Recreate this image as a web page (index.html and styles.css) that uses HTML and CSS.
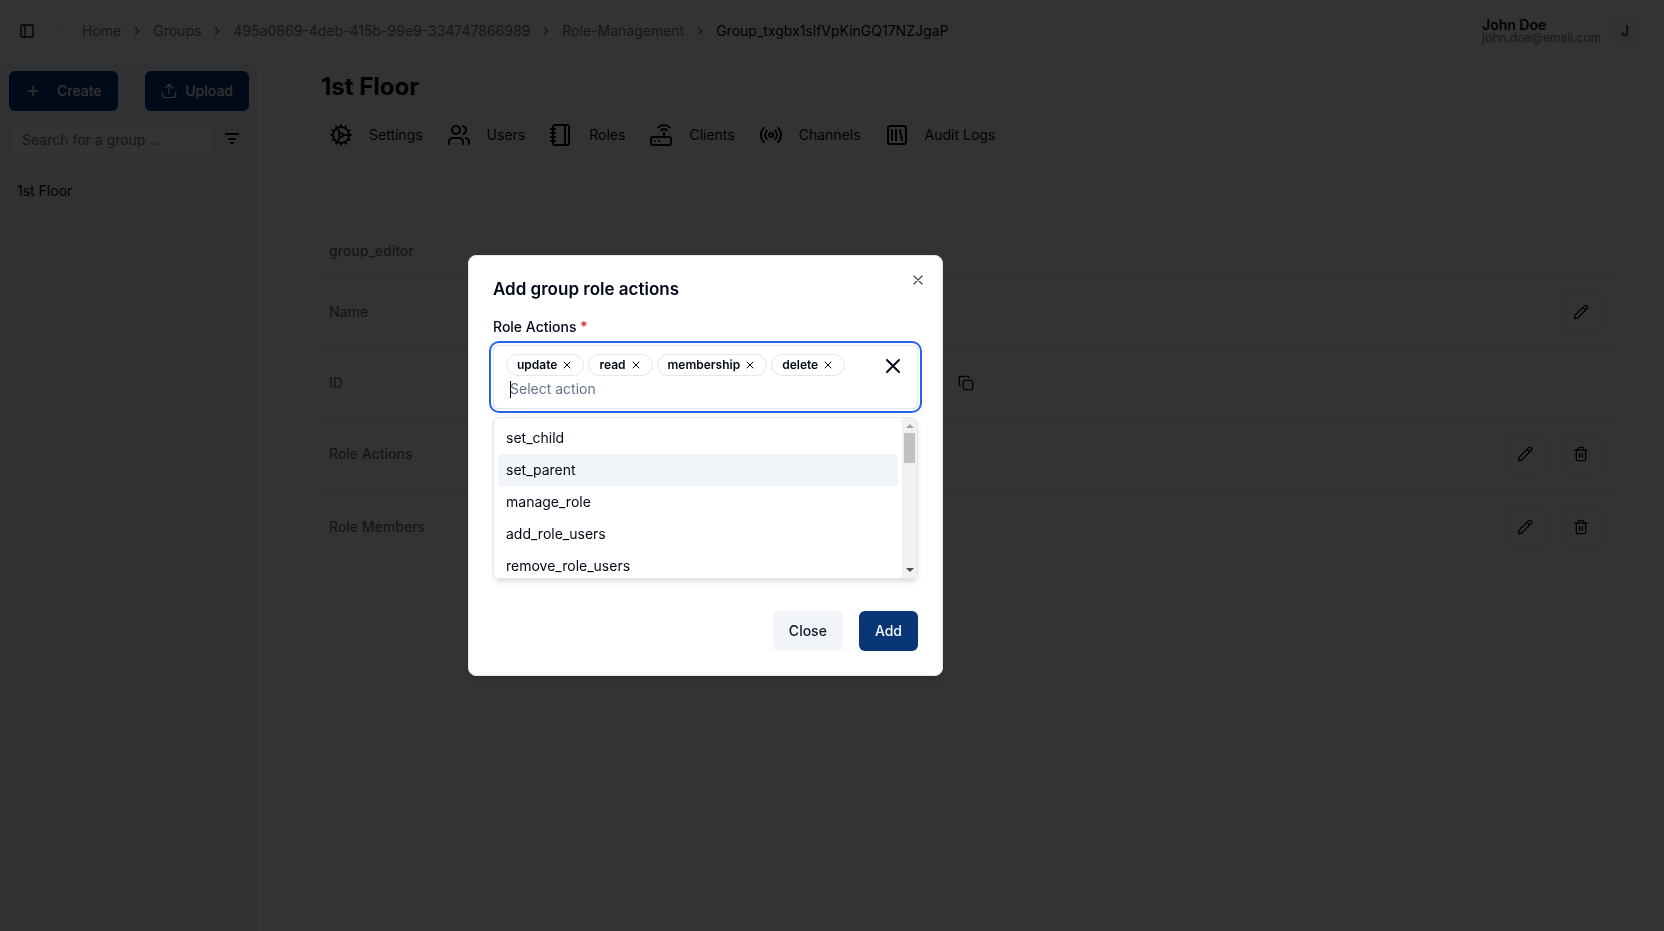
FILE: index.html
```html
<!DOCTYPE html>
<html lang="en">
<head>
<meta charset="utf-8">
<title>1st Floor - Role Management</title>
<link rel="stylesheet" href="styles.css">
</head>
<body>
<svg class="sprite" aria-hidden="true">
  <symbol id="chevron" viewBox="0 0 24 24"><path d="m9 18 6-6-6-6"/></symbol>
  <symbol id="x" viewBox="0 0 24 24"><path d="M18 6 6 18M6 6l12 12"/></symbol>
  <symbol id="pencil" viewBox="0 0 24 24"><path d="M21.174 6.812a1 1 0 0 0-3.986-3.987L3.842 16.174a2 2 0 0 0-.5.83l-1.321 4.352a.5.5 0 0 0 .623.622l4.353-1.32a2 2 0 0 0 .83-.497zM15 5l4 4"/></symbol>
  <symbol id="trash" viewBox="0 0 24 24"><path d="M3 6h18M19 6v14a2 2 0 0 1-2 2H7a2 2 0 0 1-2-2V6M8 6V4a2 2 0 0 1 2-2h4a2 2 0 0 1 2 2v2M10 11v6M14 11v6"/></symbol>
</svg>
<div class="page">
  <header class="topbar">
    <button class="plain" aria-label="Toggle sidebar"><svg class="i16" viewBox="0 0 24 24"><rect width="18" height="18" x="3" y="3" rx="2"/><path d="M9 3v18"/></svg></button>
    <span class="divider"></span>
    <nav class="crumbs" aria-label="Breadcrumb">
      <a href="#">Home</a><svg class="i14"><use href="#chevron"/></svg>
      <a href="#">Groups</a><svg class="i14"><use href="#chevron"/></svg>
      <a href="#">495a0869-4deb-415b-99e9-334747866989</a><svg class="i14"><use href="#chevron"/></svg>
      <a href="#">Role-Management</a><svg class="i14"><use href="#chevron"/></svg>
      <span class="current">Group_txgbx1slfVpKinGQ17NZJgaP</span>
    </nav>
    <div class="account">
      <div class="who"><span class="name">John Doe</span><span class="mail">john.doe@email.com</span></div>
      <span class="avatar">J</span>
    </div>
  </header>
  <div class="body">
    <aside class="sidebar">
      <div class="actions">
        <button class="btn primary create"><svg class="i16" viewBox="0 0 24 24"><path d="M5 12h14M12 5v14"/></svg>Create</button>
        <button class="btn primary upload"><svg class="i16" viewBox="0 0 16 16"><path class="thin" d="M8 10.500V1.500M4.500 4.500 8 1.200l3.500 3.300M1.500 9.500v3a2 2 0 0 0 2 2h9a2 2 0 0 0 2-2v-3"/></svg>Upload</button>
      </div>
      <div class="search">
        <input type="text" placeholder="Search for a group ..." aria-label="Search for a group">
        <button class="plain" aria-label="Filter"><svg class="i14" viewBox="0 0 14 14"><path d="M1 2h12M4 7h6M6 11h2"/></svg></button>
      </div>
      <a class="group" href="#">1st Floor</a>
    </aside>
    <main class="main">
      <h1>1st Floor</h1>
      <nav class="tabs">
        <a href="#"><svg class="i24" viewBox="0 0 24 24"><path d="M12 20a8 8 0 1 0 0-16 8 8 0 0 0 0 16ZM12 14a2 2 0 1 0 0-4 2 2 0 0 0 0 4ZM12 2v2M12 22v-2M17 20.660l-1-1.730M11 10.270 7 3.340M20.660 17l-1.730-1M3.340 7l1.730 1M14 12h8M2 12h2M20.660 7l-1.730 1M3.340 17l1.730-1M17 3.340l-1 1.730M11 13.730l-4 6.930"/></svg>Settings</a>
        <a href="#"><svg class="i24" viewBox="0 0 24 24"><path d="M16 21v-2a4 4 0 0 0-4-4H6a4 4 0 0 0-4 4v2M22 21v-2a4 4 0 0 0-3-3.870M16 3.130a4 4 0 0 1 0 7.750"/><circle cx="9" cy="7" r="4"/></svg>Users</a>
        <a href="#"><svg class="i24" viewBox="0 0 24 24"><path d="M2 6h4M2 10h4M2 14h4M2 18h4M16 2v20"/><rect width="16" height="20" x="4" y="2" rx="2"/></svg>Roles</a>
        <a href="#"><svg class="i24" viewBox="0 0 24 24"><rect width="20" height="8" x="2" y="14" rx="2"/><path d="M6.010 18H6M10.010 18H10M15 10v4M17.840 7.170a4 4 0 0 0-5.660 0M20.660 4.340a8 8 0 0 0-11.310 0"/></svg>Clients</a>
        <a href="#"><svg class="i24" viewBox="0 0 24 24"><path d="M4.900 19.100C1 15.200 1 8.800 4.900 4.900M7.800 16.200c-2.300-2.300-2.300-6.100 0-8.500M16.200 7.800c2.300 2.300 2.300 6.100 0 8.500M19.100 4.900C23 8.800 23 15.100 19.100 19"/><circle cx="12" cy="12" r="2"/></svg>Channels</a>
        <a href="#"><svg class="i24" viewBox="0 0 24 24"><rect width="18" height="18" x="3" y="3" rx="2"/><path d="M7 7v10M11 7v10M15 7l2 10"/></svg>Audit Logs</a>
      </nav>
      <table class="role">
        <thead><tr><th scope="col">group_editor</th><th></th><th></th></tr></thead>
        <tbody>
          <tr><th scope="row">Name</th><td></td><td><div class="tools"><button class="icon" aria-label="Edit name"><svg class="i16"><use href="#pencil"/></svg></button></div></td></tr>
          <tr class="id"><th scope="row">ID</th><td><button class="plain" aria-label="Copy ID"><svg class="i16" viewBox="0 0 24 24"><rect width="14" height="14" x="8" y="8" rx="2"/><path d="M4 16c-1.100 0-2-.9-2-2V4c0-1.100.9-2 2-2h10c1.100 0 2 .9 2 2"/></svg></button></td><td></td></tr>
          <tr><th scope="row">Role Actions</th><td></td><td><div class="tools"><button class="icon" aria-label="Edit role actions"><svg class="i16"><use href="#pencil"/></svg></button><button class="icon" aria-label="Delete role actions"><svg class="i16"><use href="#trash"/></svg></button></div></td></tr>
          <tr><th scope="row">Role Members</th><td></td><td><div class="tools"><button class="icon" aria-label="Edit role members"><svg class="i16"><use href="#pencil"/></svg></button><button class="icon" aria-label="Delete role members"><svg class="i16"><use href="#trash"/></svg></button></div></td></tr>
        </tbody>
      </table>
    </main>
  </div>
</div>
<div class="overlay">
  <section class="dialog" role="dialog" aria-modal="true" aria-labelledby="dialog-title">
    <button class="plain dismiss" aria-label="Close dialog"><svg class="i16"><use href="#x"/></svg></button>
    <h2 id="dialog-title">Add group role actions</h2>
    <label class="label" for="action">Role Actions <span class="required">*</span></label>
    <div class="field">
      <div class="picked">
        <div class="chips">
          <span class="chip">update<button class="plain" aria-label="Remove update"><svg class="i12"><use href="#x"/></svg></button></span>
          <span class="chip">read<button class="plain" aria-label="Remove read"><svg class="i12"><use href="#x"/></svg></button></span>
          <span class="chip">membership<button class="plain" aria-label="Remove membership"><svg class="i12"><use href="#x"/></svg></button></span>
          <span class="chip">delete<button class="plain" aria-label="Remove delete"><svg class="i12"><use href="#x"/></svg></button></span>
        </div>
        <div class="entry"><span class="caret"></span><input id="action" type="text" placeholder="Select action"></div>
      </div>
      <button class="plain clear" aria-label="Clear all"><svg class="i24"><use href="#x"/></svg></button>
    </div>
    <div class="options">
      <ul role="listbox" aria-label="Role actions">
        <li role="option">set_child</li>
        <li role="option" class="active" aria-selected="true">set_parent</li>
        <li role="option">manage_role</li>
        <li role="option">add_role_users</li>
        <li role="option">remove_role_users</li>
      </ul>
      <div class="scrollbar"><span class="up"></span><span class="thumb"></span><span class="down"></span></div>
    </div>
    <div class="footer"><button class="btn secondary">Close</button><button class="btn primary">Add</button></div>
  </section>
</div>
</body>
</html>
```
FILE: styles.css
```css
* { box-sizing: border-box; }
body {
  margin: 0;
  font: 14px/20px Inter, "Liberation Sans", sans-serif;
  color: #020817;
  background: #fff;
}
h1, h2, ul { margin: 0; padding: 0; }
a { color: inherit; text-decoration: none; }
button, input { font: inherit; color: inherit; }
svg {
  flex: none;
  display: block;
  fill: none;
  stroke: currentColor;
  stroke-width: 2;
  stroke-linecap: round;
  stroke-linejoin: round;
}
.sprite { position: absolute; width: 0; height: 0; }
.i12 { width: 12px; height: 12px; }
.i14 { width: 14px; height: 14px; }
.i16 { width: 16px; height: 16px; }
.i24 { width: 24px; height: 24px; }
.thin { stroke-width: 1.2; }
.plain { display: flex; padding: 0; border: 0; background: none; }

.page { display: flex; flex-direction: column; min-height: 100vh; }
.topbar { display: flex; align-items: center; height: 63px; padding: 0 23px 1px 19px; }
.divider { width: 1px; height: 16px; margin: 0 24px 0 22px; background: #e2e8f0; }
.crumbs { display: flex; align-items: center; gap: 9px; color: #64748b; }
.current { color: #020817; }
.account { display: flex; align-items: center; gap: 8px; margin-left: auto; }
.who { display: flex; flex-direction: column; }
.name { font-weight: 600; line-height: 14px; }
.mail { font-size: 12px; line-height: 12px; color: #64748b; }
.avatar { width: 32px; line-height: 32px; text-align: center; border-radius: 50%; background: #f1f5f9; }

.body { display: flex; flex: 1; }
.sidebar { flex: none; width: 257px; padding: 8px 8px 8px 9px; border-radius: 8px 8px 0 0; background: #f1f5f9; }
.actions { display: flex; justify-content: space-between; }
.btn { display: flex; align-items: center; height: 40px; padding: 0 16px; border: 0; border-radius: 6px; font-weight: 500; }
.primary { color: #f8fafc; background: #083677; }
.secondary { color: #0f172a; background: #f1f5f9; }
.create { gap: 16px; }
.upload { gap: 8px; }
.search { display: flex; align-items: center; gap: 10px; margin-top: 12px; }
.search input { width: 206px; height: 32px; padding: 0 12px; border: 1px solid #e2e8f0; border-radius: 6px; background: #fff; }
input::placeholder { color: #64748b; opacity: 1; }
.group { display: block; margin-top: 26px; padding: 0 8px; }

.main { flex: 1; padding: 8px 47px 0 56px; }
.main h1 { padding-left: 8px; font-size: 24px; line-height: 32px; font-weight: 700; }
.tabs { display: flex; gap: 24px; padding: 20px 16px 0; }
.tabs a { display: flex; align-items: center; gap: 16px; }
.role { width: 100%; margin-top: 80px; border-collapse: collapse; table-layout: fixed; }
.role tr { height: 73px; border-bottom: 1px solid #e2e8f0; }
.role thead tr { height: 48px; }
.role .id { height: 69px; }
.role tbody tr:last-child { border-bottom: 0; }
.role th, .role td { padding: 0 16px; text-align: left; }
.role th { font-weight: 500; color: #64748b; }
.role th:first-child { width: 629px; }
.tools { display: flex; justify-content: flex-end; gap: 16px; }
.icon { display: grid; place-items: center; width: 40px; height: 40px; padding: 0; border: 1px solid #e2e8f0; border-radius: 6px; background: #fff; }

.overlay { position: fixed; inset: 0; display: flex; align-items: center; padding-left: 468px; background: rgb(0 0 0 / 80%); }
.dialog {
  position: relative;
  width: 475px;
  padding: 24px;
  border: 1px solid #e2e8f0;
  border-radius: 8px;
  background: #fff;
  box-shadow: 0 10px 15px -3px rgb(0 0 0 / 10%), 0 4px 6px -4px rgb(0 0 0 / 10%);
}
.dismiss { position: absolute; top: 16px; right: 16px; opacity: .7; }
.dialog h2 { font-size: 17px; line-height: 18px; font-weight: 600; }
.label { display: block; margin-top: 19px; font-weight: 500; }
.required { color: #dc2626; }
.field {
  display: flex;
  justify-content: space-between;
  margin-top: 8px;
  padding: 8px 12px;
  border: 1px solid #e2e8f0;
  border-radius: 6px;
  box-shadow: 0 0 0 2px #fff, 0 0 0 4px #2563eb;
}
.chips { display: flex; gap: 4px; }
.chip { display: flex; align-items: center; gap: 4px; height: 22px; padding: 0 10px; border: 1px solid #e2e8f0; border-radius: 11px; font-size: 12px; line-height: 16px; font-weight: 600; }
.entry { display: flex; align-items: center; height: 22px; margin: 2px 0 0 4px; }
.entry input { width: 100%; padding: 0; border: 0; outline: 0; background: none; }
.caret { width: 1px; height: 17px; margin-right: -1px; background: #020817; }
.clear { align-self: flex-start; }
.options {
  display: flex;
  height: 162px;
  margin-top: 8px;
  border: 1px solid #e2e8f0;
  border-radius: 6px;
  overflow: hidden;
  box-shadow: 0 4px 6px -1px rgb(0 0 0 / 10%), 0 2px 4px -2px rgb(0 0 0 / 10%);
}
.options ul { flex: 1; padding: 4px; list-style: none; }
.options li { padding: 6px 8px; border-radius: 4px; }
.options .active { background: #f1f5f9; }
.scrollbar { display: flex; flex-direction: column; align-items: center; width: 15px; padding: 6px 0; background: #f1f1f1; }
.up, .down { border: 4px solid transparent; }
.up { border-top: 0; border-bottom-color: #a3a3a3; }
.down { margin-top: auto; border-bottom: 0; border-top-color: #505050; }
.thumb { width: 11px; height: 30px; margin-top: 5px; background: #c1c1c1; }
.footer { display: flex; justify-content: flex-end; gap: 16px; margin-top: 32px; }
```
